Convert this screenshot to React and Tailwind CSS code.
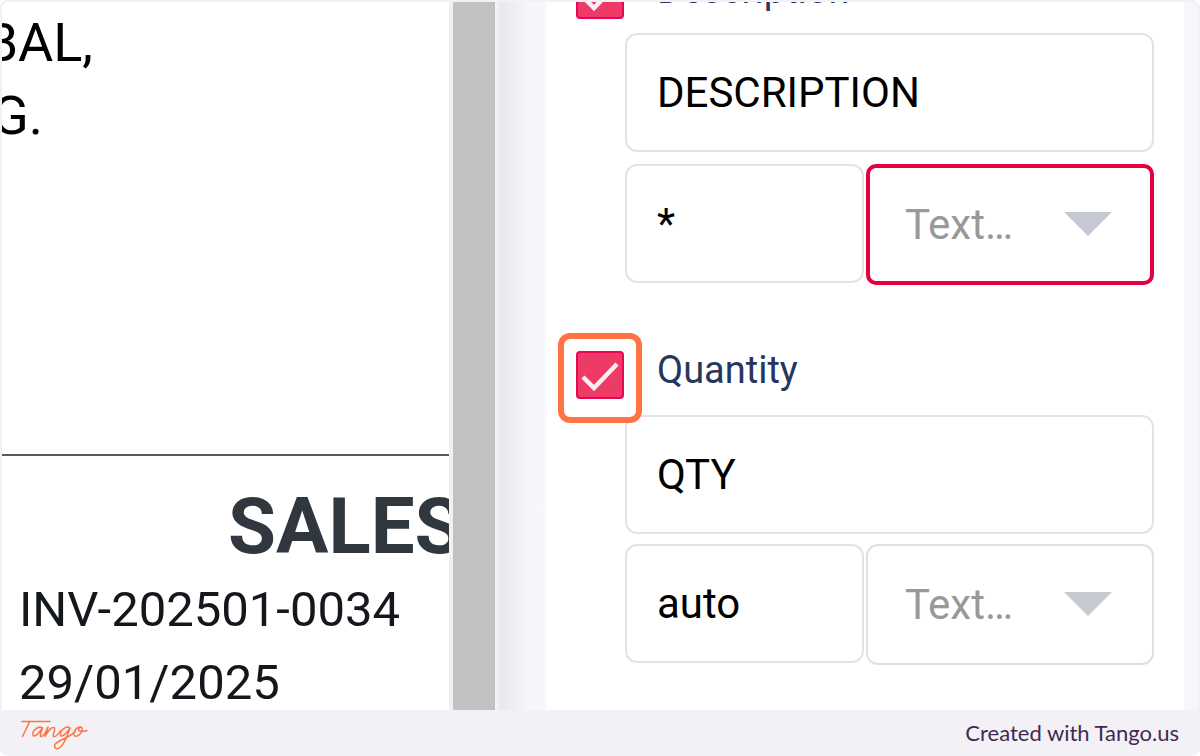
import React from "react";

function Checkbox({ id, highlighted }) {
  return (
    <span className="relative size-12 shrink-0">
      <input
        id={id}
        type="checkbox"
        defaultChecked
        className="block size-12 appearance-none rounded-sm border-2 border-[#eb0555] bg-[#ee3a66]"
      />
      <svg viewBox="0 0 48 48" className="pointer-events-none absolute inset-0 size-12" fill="none" stroke="#fbeef1" strokeWidth="4.500">
        <path d="M7 26 L18 37 L41 13" />
      </svg>
      {highlighted && (
        <span className="pointer-events-none absolute -inset-x-[18px] -top-[18px] -bottom-6 rounded-xl border-6 border-[#ff7442]" />
      )}
    </span>
  );
}

const box = "h-[119px] rounded-xl border-2 border-[#e3e3e3] bg-white px-[30px] text-[42px] text-black outline-none";

function Field({ id, label, name, width, focused, highlighted, labelGap, rowGap }) {
  return (
    <section className="pr-[30px]">
      <div className={`flex items-start gap-[33px] pt-[66px] pl-[30px] ${labelGap}`}>
        <Checkbox id={id} highlighted={highlighted} />
        <label htmlFor={id} className="text-[38px] leading-[38px] text-[#26365c]">
          {label}
        </label>
      </div>
      <div className={`flex flex-col pl-[79px] ${rowGap}`}>
        <input aria-label={`${label} heading`} defaultValue={name} className={`w-full ${box}`} />
        <div className="flex items-start gap-0.5">
          <input aria-label={`${label} width`} defaultValue={width} className={`w-[239px] shrink-0 ${box}`} />
          <div className="relative min-w-0 flex-1">
            <select
              aria-label={`${label} alignment`}
              className={`h-[121px] w-full appearance-none bg-white text-[42px] text-[#999999] outline-none ${
                focused ? "rounded-[10px] border-4 border-[#e4003f] pl-[35px]" : "rounded-xl border-2 border-[#e0e0e0] pl-[37px]"
              }`}
            >
              <option>Text…</option>
            </select>
            <svg viewBox="0 0 48 24" className="pointer-events-none absolute top-12 right-[42px] h-6 w-12" fill="#c5cad2">
              <path d="M0 0 H48 L24 24 Z" />
            </svg>
          </div>
        </div>
      </div>
    </section>
  );
}

function InvoicePreview() {
  return (
    <article className="w-[447px] shrink-0 overflow-hidden bg-white pt-1 text-[#14181d]">
      <div className="text-[54px] leading-[73px] whitespace-nowrap text-black">
        <p className="flex w-[91px] justify-end overflow-hidden">GLOBAL,</p>
        <p className="flex w-[41px] justify-end overflow-hidden">G.</p>
      </div>
      <hr className="mt-[302px] border-t-2 border-[#5a5a5a]" />
      <h1 className="mt-[31px] pl-[226px] text-[78px] leading-[80px] font-bold whitespace-nowrap text-[#31373f]">SALES</h1>
      <div className="mt-1.5 pl-[17px] text-[49px] leading-[73px] whitespace-nowrap">
        <p>INV-202501-0034</p>
        <p>29/01/2025</p>
      </div>
    </article>
  );
}

function TangoLogo() {
  return (
    <svg
      role="img"
      aria-label="Tango"
      viewBox="0 0 68 34"
      className="h-[34px] w-[68px]"
      fill="none"
      stroke="#ff7442"
      strokeWidth="1.500"
      strokeLinecap="round"
      strokeLinejoin="round"
    >
      <path d="M2 5.500 H30" />
      <path d="M9.500 5.500 C8 10 5 15 2.500 20.500" />
      <path d="M22.500 12 C18 9 12 15 13 19 C14 22.500 19.500 17 22.500 12 C20.500 17 19.500 21 21.500 20.500 C24 20 26 16 28 11 C27.500 15 25.500 18 25 20.500 C28 15 31.500 11 34 11.500 C36.500 12.500 32 19 33.500 20.500 C36 21.500 38.500 17.500 40.500 15" />
      <path d="M50 12 C46 9 39.500 15 40.500 19 C41.500 22.500 47 17 50 12 C47.500 19 45 27.500 40 31.500 C37 34 33.500 32 35 28.500 C37.500 24 49 22.500 55 15.500" />
      <path d="M60 11 C56 11 53 16 54 19 C56 22.500 63 17.500 62 12 C61 9.500 57.500 12 59 14.500 C61 16.500 64 15.500 67 14.500" />
    </svg>
  );
}

export default function App() {
  return (
    <div className="bg-white">
      <div className="flex h-screen flex-col overflow-hidden rounded-lg bg-[#f3f1f6] font-[Roboto,sans-serif]">
        <main className="flex min-h-0 flex-1 overflow-hidden rounded-t-lg border-x-2 border-t-2 border-[#f3f1f6] bg-[#f5f7fc]">
          <InvoicePreview />
          <div className="w-[50px] shrink-0 border-x-4 border-[#f1f1f1] bg-[#c1c1c1]" />
          <div className="w-[47px] shrink-0 bg-linear-to-r from-[#e6e8eb] to-[#f5f7fc] to-70%" />
          <div className="mr-3.5 min-w-0 flex-1 overflow-hidden bg-white">
            <div className="-mt-[97px]">
              <Field id="description" label="Description" name="DESCRIPTION" width="*" focused labelGap="pb-3.5" rowGap="gap-3" />
              <Field id="quantity" label="Quantity" name="QTY" width="auto" highlighted labelGap="pb-4" rowGap="gap-2.5" />
            </div>
          </div>
        </main>
        <footer className="flex h-[46px] shrink-0 items-center justify-between pr-[21px] pl-5">
          <TangoLogo />
          <p className="font-[Lato,sans-serif] text-[22px] leading-7 text-[#3f2b52]">Created with Tango.us</p>
        </footer>
      </div>
    </div>
  );
}
